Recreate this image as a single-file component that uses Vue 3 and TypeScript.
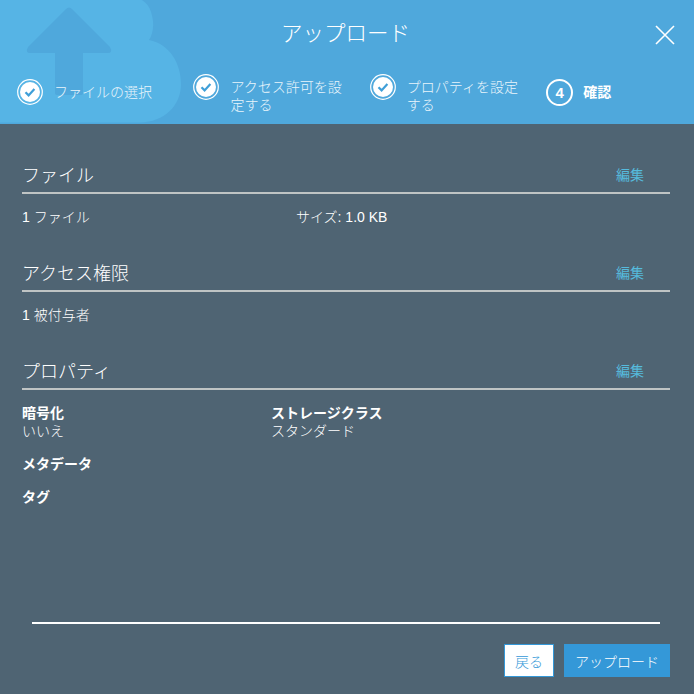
<template>
  <div class="dialog">
    <header class="head">
      <svg class="cloud" width="190" height="124" viewBox="0 0 190 124">
        <path d="M0 0H106C112 -8 146 -8 151 12C155 24 153 34 149 40C170 44 181 64 181 84C181 106 164 122 140 122.500H0Z" fill="#56b4e5" />
        <path d="M66 9Q69 6 72 9L110 47Q113 53 108 53H83V93Q83 95 80 95H58Q55 95 55 93V53H30Q25 53 28 47Z" fill="#4fa8dc" />
      </svg>
      <div class="title-row">
        <h1 class="title">アップロード</h1>
        <button class="close" aria-label="閉じる">
          <svg width="20" height="20" viewBox="0 0 20 20">
            <path d="M1 1L19 19M19 1L1 19" stroke="#fff" stroke-width="1.600" fill="none" />
          </svg>
        </button>
      </div>
      <ol class="steps">
        <li v-for="(step, i) in steps" :key="step.label" class="step" :class="{ current: !step.done, lifted: step.lifted }">
          <svg v-if="step.done" class="step-icon" width="26" height="26" viewBox="0 0 26 26">
            <circle cx="13" cy="13" r="12.300" fill="none" stroke="#fff" stroke-width="1.200" />
            <circle cx="13" cy="13" r="10" fill="#fff" />
            <path d="M8.500 13.300L11.600 16.400L17.400 10" fill="none" stroke="#3f9fd8" stroke-width="2.200" />
          </svg>
          <span v-else class="step-num">{{ i + 1 }}</span>
          <span class="step-label">{{ step.label }}</span>
        </li>
      </ol>
    </header>

    <main class="body">
      <section class="block">
        <div class="block-head">
          <h2>ファイル</h2>
          <a class="edit">編集</a>
        </div>
        <div class="summary">
          <span class="col-file">1 ファイル</span>
          <span>サイズ: 1.0 KB</span>
        </div>
      </section>

      <section class="block">
        <div class="block-head">
          <h2>アクセス権限</h2>
          <a class="edit">編集</a>
        </div>
        <div class="summary">
          <span>1 被付与者</span>
        </div>
      </section>

      <section class="block">
        <div class="block-head">
          <h2>プロパティ</h2>
          <a class="edit">編集</a>
        </div>
        <div class="props">
          <div class="prop-row">
            <div class="prop">
              <strong>暗号化</strong>
              <span>いいえ</span>
            </div>
            <div class="prop">
              <strong>ストレージクラス</strong>
              <span>スタンダード</span>
            </div>
          </div>
          <strong class="prop-single">メタデータ</strong>
          <strong class="prop-single">タグ</strong>
        </div>
      </section>
    </main>

    <footer class="foot">
      <div class="foot-rule"></div>
      <div class="actions">
        <button class="btn back">戻る</button>
        <button class="btn primary">アップロード</button>
      </div>
    </footer>
  </div>
</template>

<script setup lang="ts">
interface Step {
  label: string
  done: boolean
  lifted?: boolean
}

const steps: Step[] = [
  { label: 'ファイルの選択', done: true },
  { label: 'アクセス許可を設定する', done: true, lifted: true },
  { label: 'プロパティを設定する', done: true, lifted: true },
  { label: '確認', done: false }
]
</script>

<style>
html,
body {
  margin: 0;
  background: #4f6473;
}
</style>

<style scoped>
.dialog {
  width: 694px;
  height: 694px;
  display: flex;
  flex-direction: column;
  background: #4f6473;
  color: #fff;
  font-family: "Liberation Sans", "Noto Sans CJK JP", sans-serif;
  overflow: hidden;
}

.head {
  position: relative;
  height: 124px;
  flex: none;
  background: #4fa8dc;
  overflow: hidden;
}

.cloud {
  position: absolute;
  left: 0;
  top: 0;
}

.title-row {
  position: relative;
  height: 74px;
  display: flex;
  justify-content: center;
}

.title {
  margin: 0;
  padding: 18px 3px 0 0;
  font-size: 21.500px;
  font-weight: 300;
  line-height: 32px;
}

.close {
  position: absolute;
  right: 19px;
  top: 25px;
  width: 20px;
  height: 20px;
  padding: 0;
  border: 0;
  background: none;
  line-height: 0;
}

.steps {
  position: relative;
  display: flex;
  margin: 0;
  padding: 0 0 0 17px;
  list-style: none;
}

.step {
  flex: none;
  width: 176.400px;
  box-sizing: border-box;
  display: flex;
  align-items: flex-start;
  gap: 11px;
  padding-right: 20px;
  padding-top: 5px;
  font-size: 14px;
  font-weight: 300;
  line-height: 18px;
  color: #e9f5fb;
}

.step.lifted {
  padding-top: 0;
}

.step-icon {
  flex: none;
}

.step-label {
  padding-top: 4px;
}

.step.current {
  font-weight: 700;
  color: #fff;
}

.step-num {
  flex: none;
  box-sizing: border-box;
  width: 27px;
  height: 27px;
  margin-right: -1px;
  border: 2px solid #fff;
  border-radius: 50%;
  text-align: center;
  font-size: 15px;
  line-height: 23px;
}

.body {
  flex: 1;
  padding: 38px 24px 0 22px;
}

.block {
  height: 98px;
}

.block-head {
  display: flex;
  justify-content: space-between;
  align-items: flex-start;
  height: 30px;
  border-bottom: 2px solid #bfc4c4;
}

.block-head h2 {
  margin: 0;
  font-size: 18px;
  font-weight: 300;
  line-height: 28px;
  color: #fff;
}

.edit {
  width: 54px;
  font-size: 14px;
  line-height: 26px;
  color: #56bbdd;
}

.summary {
  display: flex;
  padding-top: 14px;
  font-size: 14px;
  font-weight: 300;
  line-height: 18px;
  color: #fff;
}

.col-file {
  width: 274px;
}

.props {
  padding-top: 14px;
  font-size: 14px;
  font-weight: 300;
  line-height: 18px;
  color: #fff;
}

.prop-row {
  display: flex;
}

.prop {
  width: 249px;
  display: flex;
  flex-direction: column;
}

.prop strong,
.prop-single {
  display: block;
  color: #fff;
  font-weight: 700;
}

.prop-single {
  margin-top: 15px;
}

.foot {
  flex: none;
  height: 72px;
  padding: 0 24px 0 32px;
}

.foot-rule {
  height: 2px;
  margin-right: 10px;
  background: #fff;
}

.actions {
  display: flex;
  justify-content: flex-end;
  gap: 10px;
  margin-top: 20px;
}

.btn {
  height: 33px;
  box-sizing: border-box;
  padding: 0;
  font-family: inherit;
  font-size: 14px;
  font-weight: 300;
}

.back {
  width: 50px;
  border: 1px solid #3498d8;
  background: #fff;
  color: #3498d8;
}

.primary {
  width: 106px;
  border: 0;
  background: #3498d8;
  color: #fff;
}
</style>
